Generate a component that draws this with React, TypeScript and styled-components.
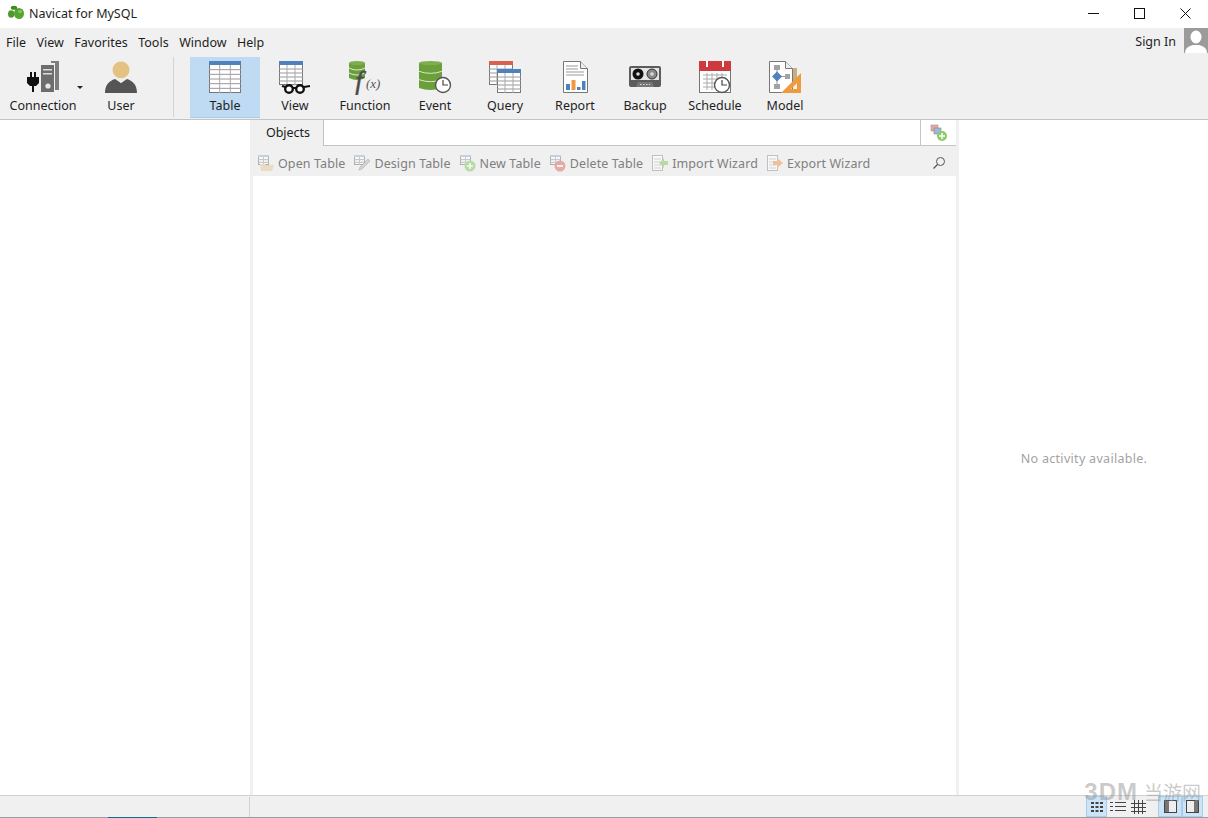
import React from "react";
import styled, { createGlobalStyle } from "styled-components";

const GlobalStyle = createGlobalStyle`
    html, body {
        margin: 0;
        padding: 0;
        background: #fff;
    }
    body {
        font-family: "Noto Sans", "Open Sans", sans-serif;
        font-size: 12.5px;
        color: #1e1e1e;
    }
`;

const Window = styled.div`
    position: relative;
    width: 1208px;
    height: 818px;
    display: flex;
    flex-direction: column;
    overflow: hidden;
`;

const TitleBar = styled.div`
    height: 28px;
    box-sizing: border-box;
    padding-bottom: 2px;
    display: flex;
    align-items: center;
    background: #fff;
`;

const AppTitle = styled.span`
    margin-left: 5px;
    font-size: 12.5px;
    flex: 1;
`;

const LogoIcon = styled.svg`
    margin-left: 8px;
`;

const WinButton = styled.div`
    width: 46px;
    height: 26px;
    display: flex;
    align-items: center;
    justify-content: center;
`;

const WinControls = styled.div`
    display: flex;
`;

const MenuRow = styled.div`
    height: 28px;
    display: flex;
    align-items: flex-start;
    background: #f0f0f0;
`;

const MenuList = styled.div`
    display: flex;
    flex: 1;
    padding-top: 6px;
    padding-left: 1px;
`;

const MenuItem = styled.span`
    padding: 0 5px;
    margin-right: 0.5px;
    line-height: 18px;
`;

const SignIn = styled.span`
    margin-right: 8px;
    padding-top: 5px;
    line-height: 18px;
`;

const Avatar = styled.div`
    width: 24px;
    height: 25px;
    background: #9b9b9b;
    overflow: hidden;
`;

const Toolbar = styled.div`
    height: 63px;
    display: flex;
    align-items: flex-start;
    background: #f0f0f0;
    border-bottom: 1px solid #c4c4c4;
`;

const ToolButton = styled.div<{ $active?: boolean; $width?: number }>`
    position: relative;
    width: ${(p) => p.$width ?? 70}px;
    height: 61px;
    margin-top: 1px;
    box-sizing: border-box;
    display: flex;
    flex-direction: column;
    align-items: center;
    padding-top: 2px;
    background: ${(p) => (p.$active ? "#bfdbf3" : "transparent")};
    border-bottom: 1px solid ${(p) => (p.$active ? "#a6cbec" : "transparent")};
    svg {
        display: block;
    }
`;

const ToolLabel = styled.span`
    margin-top: 2px;
    line-height: 18px;
    white-space: nowrap;
`;

const DropArrow = styled.span`
    position: absolute;
    left: 77px;
    top: 29px;
    width: 0;
    height: 0;
    border-left: 3px solid transparent;
    border-right: 3px solid transparent;
    border-top: 3px solid #222;
`;

const ToolSeparator = styled.div`
    width: 1px;
    height: 60px;
    margin: 1px 16px 0 17px;
    background: #d4d4d4;
`;

const Main = styled.div`
    flex: 1;
    display: grid;
    grid-template-columns: 250px 709px 1fr;
    min-height: 0;
    background: #fff;
`;

const LeftPanel = styled.div`
    background: #fff;
`;

const CenterPanel = styled.div`
    display: flex;
    flex-direction: column;
    border-left: 3px solid #f0f0f0;
    border-right: 3px solid #f0f0f0;
`;

const TabRow = styled.div`
    height: 25px;
    flex: none;
    display: flex;
    border-bottom: 1px solid #c4c4c4;
    background: #fff;
`;

const Tab = styled.div`
    width: 70px;
    display: flex;
    align-items: center;
    justify-content: center;
    padding-bottom: 2px;
    background: #f0f0f0;
    border-right: 1px solid #c4c4c4;
    margin-bottom: -1px;
`;

const TabFill = styled.div`
    flex: 1;
`;

const AddTabButton = styled.div`
    width: 35px;
    display: flex;
    align-items: center;
    justify-content: center;
    border-left: 1px solid #c4c4c4;
`;

const ActionBar = styled.div`
    height: 30px;
    flex: none;
    box-sizing: border-box;
    padding: 4px 0 0 5px;
    display: flex;
    align-items: center;
    gap: 9px;
    background: #f0f0f0;
`;

const Action = styled.div`
    display: flex;
    align-items: center;
    gap: 4px;
    color: #7f7f7f;
    letter-spacing: 0.1px;
    white-space: nowrap;
`;

const SearchIcon = styled.svg`
    margin-left: auto;
    margin-right: 10px;
`;

const ObjectArea = styled.div`
    flex: 1;
    background: #fff;
`;

const RightPanel = styled.div`
    display: flex;
    align-items: center;
    justify-content: center;
    padding: 2px 0 0 1px;
    color: #a3a3a3;
    letter-spacing: 0.3px;
`;

const StatusBar = styled.div`
    height: 21px;
    flex: none;
    display: flex;
    align-items: center;
    background: #f0f0f0;
    border-top: 1px solid #d2d2d2;
    border-bottom: 1px solid #9c9c9c;
`;

const StatusCell = styled.div`
    width: 249px;
    height: 20px;
    border-right: 1px solid #d2d2d2;
`;

const StatusIcons = styled.div`
    margin-left: auto;
    margin-right: 5px;
    display: flex;
    align-items: center;
`;

const StatusToggle = styled.div<{ $active?: boolean; $width?: number }>`
    width: ${(p) => p.$width ?? 21}px;
    height: 21px;
    display: flex;
    align-items: center;
    justify-content: center;
    box-sizing: border-box;
    background: ${(p) => (p.$active ? "#cde4f7" : "transparent")};
    border: 1px solid ${(p) => (p.$active ? "#a5cdf0" : "transparent")};
`;

const ToggleGap = styled.div`
    width: 9px;
`;

const Watermark = styled.div`
    position: absolute;
    right: 7px;
    bottom: 16px;
    display: flex;
    align-items: center;
    gap: 6px;
    color: rgba(150, 150, 150, 0.5);
    pointer-events: none;
`;

const WatermarkMark = styled.span`
    font-family: "Liberation Sans", sans-serif;
    font-weight: 700;
    font-size: 24px;
    letter-spacing: 1px;
    line-height: 20px;
`;

const WatermarkName = styled.span`
    font-family: "Noto Sans CJK SC", sans-serif;
    font-size: 19px;
    line-height: 20px;
`;

const BottomBleed = styled.div`
    position: absolute;
    left: 108px;
    bottom: 0;
    width: 49px;
    height: 1px;
    background: #0f6c8c;
`;

/* ---- drawings ---- */

const Grid = ({ x, y, w, h, head, rows = 5, cols = 3, headH = 4 }: { x: number; y: number; w: number; h: number; head: string; rows?: number; cols?: number; headH?: number }) => {
    const rowH = (h - headH) / rows;
    const colW = w / cols;
    return (
        <g>
            <rect x={x + 0.5} y={y + 0.5} width={w - 1} height={h - 1} fill="#fff" stroke="#777" />
            {Array.from({ length: rows - 1 }, (_, i) => (
                <line key={i} x1={x} x2={x + w} y1={y + headH + rowH * (i + 1)} y2={y + headH + rowH * (i + 1)} stroke="#999" />
            ))}
            {Array.from({ length: cols - 1 }, (_, i) => (
                <line key={i} x1={x + colW * (i + 1)} x2={x + colW * (i + 1)} y1={y + headH} y2={y + h} stroke="#aaa" />
            ))}
            <rect x={x} y={y} width={w} height={headH} fill={head} />
        </g>
    );
};

// solid cylinder with thin light arcs between the disks
const Db = ({ x, y, w, h, disks }: { x: number; y: number; w: number; h: number; disks: number }) => {
    const step = (h - 4) / disks;
    return (
        <g>
            <path d={`M${x} ${y + 2}V${y + h - 2}Q${x + w / 2} ${y + h + 2} ${x + w} ${y + h - 2}V${y + 2}z`} fill="#6a9f3a" />
            <ellipse cx={x + w / 2} cy={y + 2} rx={w / 2} ry={2} fill="#7fae4f" />
            {Array.from({ length: disks - 1 }, (_, i) => (
                <path key={i} d={`M${x} ${y + 2 + step * (i + 1)}Q${x + w / 2} ${y + 6 + step * (i + 1)} ${x + w} ${y + 2 + step * (i + 1)}`} fill="none" stroke="#dbe8cd" />
            ))}
        </g>
    );
};

const Clock = ({ cx, cy, r }: { cx: number; cy: number; r: number }) => (
    <g>
        <circle cx={cx} cy={cy} r={r} fill="#fff" stroke="#555" strokeWidth="1.4" />
        <path d={`M${cx} ${cy - r + 2.5}V${cy}H${cx + r - 2.5}`} fill="none" stroke="#444" strokeWidth="1.2" />
    </g>
);

const Ico36 = ({ children }: { children: React.ReactNode }) => (
    <svg width="36" height="36" viewBox="0 0 36 36">
        {children}
    </svg>
);

const ConnectionIcon = () => (
    <Ico36>
        <path d="M2 18h3v-5h2v5h2v-5h2v5h3v6l-3 3h-2v6H7v-6H5l-3-3z" fill="#111" />
        <path d="M16 6h13v27H16z" fill="#6d6d6d" />
        <path d="M30 2h4v29h-4z" fill="#7d7d7d" />
        <path d="M26 2h8v2h-8z" fill="#7d7d7d" />
        <rect x="18" y="10" width="9" height="1.5" fill="#ddd" />
        <rect x="18" y="14" width="9" height="1.5" fill="#ddd" />
        <circle cx="23" cy="27" r="2.6" fill="#e8e8e8" />
    </Ico36>
);

const UserIcon = () => (
    <Ico36>
        <circle cx="18" cy="11" r="8.5" fill="#e4c283" />
        <path d="M2 34c0-8 4-12 10-14l6 4 6-4c6 2 10 6 10 14z" fill="#555" />
        <path d="M13 19.500h10L18 24z" fill="#eee" />
    </Ico36>
);

const TableIcon = () => (
    <Ico36>
        <Grid x={2} y={2} w={32} h={32} head="#4f81bd" rows={6} cols={3} />
    </Ico36>
);

const ViewIcon = () => (
    <Ico36>
        <Grid x={2} y={2} w={24} h={24} head="#4f81bd" rows={5} cols={3} />
        <circle cx="12" cy="30" r="3.8" fill="#fff" stroke="#111" strokeWidth="2.4" />
        <circle cx="23" cy="30" r="3.8" fill="#fff" stroke="#111" strokeWidth="2.4" />
        <path d="M5 27l4 1M15 29h5M27 28l6-1" stroke="#111" strokeWidth="2.2" fill="none" />
    </Ico36>
);

const FunctionIcon = () => (
    <Ico36>
        <Db x={2} y={2} w={16} h={19} disks={3} />
        <text x="8" y="31" fontFamily="Liberation Serif, serif" fontStyle="italic" fontSize="28" fill="#4a4a4a" stroke="#4a4a4a" strokeWidth=".4">f</text>
        <text x="19" y="29" fontFamily="Liberation Serif, serif" fontStyle="italic" fontSize="13" fill="#555">(x)</text>
    </Ico36>
);

const EventIcon = () => (
    <Ico36>
        <Db x={2} y={2} w={23} h={29} disks={3} />
        <Clock cx={26} cy={26} r={7.5} />
    </Ico36>
);

const QueryIcon = () => (
    <Ico36>
        <Grid x={2} y={2} w={24} h={24} head="#d9604c" rows={5} cols={3} />
        <Grid x={10} y={10} w={24} h={24} head="#4f81bd" rows={5} cols={3} />
    </Ico36>
);

const ReportIcon = () => (
    <Ico36>
        <path d="M6.500 2.500h17l7 7v24h-24z" fill="#fff" stroke="#777" />
        <path d="M23.500 2.500v7h7" fill="#eee" stroke="#777" />
        <path d="M9 7h12M9 10h12M9 13h18M9 16h18" stroke="#999" />
        <rect x="9" y="25" width="4" height="6" fill="#4f81bd" />
        <rect x="14.500" y="21" width="4" height="10" fill="#f09a3e" />
        <rect x="20" y="28" width="3.500" height="3" fill="#4f81bd" />
        <rect x="25" y="22" width="3.500" height="9" fill="#4f81bd" />
    </Ico36>
);

const BackupIcon = () => (
    <Ico36>
        <rect x="2" y="7" width="32" height="21" rx="2" fill="#5c5c5c" />
        <rect x="4" y="9" width="28" height="12" fill="#e4e4e4" />
        <circle cx="11" cy="15" r="5.500" fill="#111" />
        <circle cx="11" cy="15" r="1.800" fill="#ddd" />
        <circle cx="25" cy="15" r="5" fill="#8a8a8a" stroke="#333" />
        <circle cx="25" cy="15" r="1.800" fill="#ddd" />
        <path d="M9 28l2-5h14l2 5z" fill="#777" />
        <path d="M13 25.500h10" stroke="#ddd" strokeDasharray="1.500 1.500" />
    </Ico36>
);

const ScheduleIcon = () => (
    <Ico36>
        <rect x="2.500" y="2.500" width="31" height="31" fill="#fff" stroke="#777" />
        <rect x="2" y="2" width="32" height="10" fill="#cf3a3f" />
        <rect x="9" y="2" width="2" height="6" fill="#fff" />
        <rect x="25" y="2" width="2" height="6" fill="#fff" />
        <path d="M6 16h24M6 20h24M6 24h24M6 28h24M10 14v17M15 14v17M20 14v17M25 14v17" stroke="#aaa" />
        <Clock cx={25} cy={26} r={7.5} />
    </Ico36>
);

const ModelIcon = () => (
    <Ico36>
        <path d="M2.500 2.500h16l7 7v24h-23z" fill="#fff" stroke="#777" />
        <path d="M18.500 2.500v7h7" fill="#eee" stroke="#777" />
        <rect x="7" y="6" width="6" height="5" fill="#a3a3a3" />
        <rect x="7" y="25" width="6" height="5" fill="#a3a3a3" />
        <rect x="18" y="15" width="5" height="5" fill="#a3a3a3" />
        <path d="M10 11v4M10 21v4M14 17.500h4" stroke="#999" />
        <path d="M10 12.500l5 5-5 5-5-5z" fill="#4f81bd" />
        <rect x="26" y="9" width="4" height="14" fill="#c9ae84" />
        <path d="M34 14v20H14zM30 24l-6 6h6z" fill="#f09a3e" fillRule="evenodd" />
    </Ico36>
);

const SmallTable = ({ x = 0, y = 0 }: { x?: number; y?: number }) => <Grid x={x} y={y} w={11} h={10} head="#9db8d8" rows={3} cols={2} headH={2} />;

const Muted = styled.svg`
    opacity: 0.55;
`;

const Small = ({ children }: { children: React.ReactNode }) => (
    <Muted width="16" height="18" viewBox="0 0 16 18">
        {children}
    </Muted>
);

const actions = [
    {
        label: "Open Table",
        icon: (
            <Small>
                <SmallTable y={1} />
                <path d="M2 10h5l1 1h8l-2 6H3z" fill="#e3cf9e" />
            </Small>
        ),
    },
    {
        label: "Design Table",
        icon: (
            <Small>
                <SmallTable y={1} />
                <path d="M14 5l2 2-8 8-3 1 1-3z" fill="#bbb" stroke="#777" strokeWidth=".6" />
            </Small>
        ),
    },
    {
        label: "New Table",
        icon: (
            <Small>
                <SmallTable y={1} />
                <circle cx="10" cy="12" r="5.500" fill="#8ccb6a" />
                <path d="M10 9v6M7 12h6" stroke="#fff" strokeWidth="1.600" />
            </Small>
        ),
    },
    {
        label: "Delete Table",
        icon: (
            <Small>
                <SmallTable y={1} />
                <circle cx="10" cy="12" r="5.500" fill="#d9736b" />
                <path d="M7 12h6" stroke="#fff" strokeWidth="1.800" />
            </Small>
        ),
    },
    {
        label: "Import Wizard",
        icon: (
            <Small>
                <rect x=".5" y="1.500" width="10" height="15" fill="#fff" stroke="#999" />
                <path d="M2 5h7M2 8h7M2 11h7M2 14h7" stroke="#bbb" />
                <path d="M16 7v4h-4v3l-5-5 5-5v3z" fill="#8ccb6a" />
            </Small>
        ),
    },
    {
        label: "Export Wizard",
        icon: (
            <Small>
                <rect x=".5" y="1.500" width="10" height="15" fill="#fff" stroke="#999" />
                <path d="M2 5h7M2 8h7M2 11h7M2 14h7" stroke="#bbb" />
                <path d="M6 7v4h4v3l6-5-6-5v3z" fill="#eb9c5a" />
            </Small>
        ),
    },
];

const tools = [
    { label: "Table", icon: <TableIcon />, active: true },
    { label: "View", icon: <ViewIcon /> },
    { label: "Function", icon: <FunctionIcon /> },
    { label: "Event", icon: <EventIcon /> },
    { label: "Query", icon: <QueryIcon /> },
    { label: "Report", icon: <ReportIcon /> },
    { label: "Backup", icon: <BackupIcon /> },
    { label: "Schedule", icon: <ScheduleIcon /> },
    { label: "Model", icon: <ModelIcon /> },
];

const menus = ["File", "View", "Favorites", "Tools", "Window", "Help"];

const App = () => {
    return (
        <Window>
            <GlobalStyle />
            <TitleBar>
                <LogoIcon width="16" height="16" viewBox="0 0 16 16">
                    <ellipse cx="3.200" cy="9" rx="3.200" ry="3.800" fill="#4e9b2d" />
                    <ellipse cx="11" cy="8.500" rx="5" ry="5.500" fill="#55a530" />
                    <ellipse cx="6" cy="2.800" rx="3.200" ry="2" fill="#3f8a24" />
                    <ellipse cx="12" cy="6.500" rx="2" ry="1.500" fill="#86c95d" />
                </LogoIcon>
                <AppTitle>Navicat for MySQL</AppTitle>
                <WinControls>
                    <WinButton>
                        <svg width="11" height="11" viewBox="0 0 11 11">
                            <path d="M0 5.500h11" stroke="#111" />
                        </svg>
                    </WinButton>
                    <WinButton>
                        <svg width="11" height="11" viewBox="0 0 11 11">
                            <rect x=".5" y=".5" width="10" height="10" fill="none" stroke="#111" />
                        </svg>
                    </WinButton>
                    <WinButton>
                        <svg width="11" height="11" viewBox="0 0 11 11">
                            <path d="M.5.5l10 10M10.500.5l-10 10" stroke="#111" />
                        </svg>
                    </WinButton>
                </WinControls>
            </TitleBar>

            <MenuRow>
                <MenuList>
                    {menus.map((m) => (
                        <MenuItem key={m}>{m}</MenuItem>
                    ))}
                </MenuList>
                <SignIn>Sign In</SignIn>
                <Avatar>
                    <svg width="24" height="25" viewBox="0 0 24 25">
                        <ellipse cx="12" cy="9" rx="5.500" ry="6.500" fill="#fff" />
                        <path d="M1 25c0-5 4-7 8-8h6c4 1 8 3 8 8z" fill="#fff" />
                    </svg>
                </Avatar>
            </MenuRow>

            <Toolbar>
                <ToolButton $width={86}>
                    <ConnectionIcon />
                    <ToolLabel>Connection</ToolLabel>
                    <DropArrow />
                </ToolButton>
                <ToolButton>
                    <UserIcon />
                    <ToolLabel>User</ToolLabel>
                </ToolButton>
                <ToolSeparator />
                {tools.map((t) => (
                    <ToolButton key={t.label} $active={t.active}>
                        {t.icon}
                        <ToolLabel>{t.label}</ToolLabel>
                    </ToolButton>
                ))}
            </Toolbar>

            <Main>
                <LeftPanel />
                <CenterPanel>
                    <TabRow>
                        <Tab>Objects</Tab>
                        <TabFill />
                        <AddTabButton>
                            <svg width="18" height="18" viewBox="0 0 18 18">
                                <rect x="1" y="1" width="7" height="6" fill="#e8a79d" stroke="#999" strokeWidth=".6" />
                                <rect x="4" y="4" width="7" height="6" fill="#9db8d8" stroke="#888" strokeWidth=".6" />
                                <circle cx="12" cy="12" r="5" fill="#8ccb6a" />
                                <path d="M12 9v6M9 12h6" stroke="#fff" strokeWidth="1.500" />
                            </svg>
                        </AddTabButton>
                    </TabRow>
                    <ActionBar>
                        {actions.map((a) => (
                            <Action key={a.label}>
                                {a.icon}
                                {a.label}
                            </Action>
                        ))}
                        <SearchIcon width="14" height="14" viewBox="0 0 14 14">
                            <circle cx="8.500" cy="5.500" r="4" fill="none" stroke="#555" />
                            <path d="M5.500 8.500L1.500 12.500" stroke="#555" strokeWidth="1.200" />
                        </SearchIcon>
                    </ActionBar>
                    <ObjectArea />
                </CenterPanel>
                <RightPanel>No activity available.</RightPanel>
            </Main>

            <StatusBar>
                <StatusCell />
                <StatusIcons>
                    <StatusToggle $active>
                        <svg width="14" height="14" viewBox="0 0 14 14">
                            <path d="M1 2h3v2H1zM5.500 2h3v2h-3zM10 2h3v2h-3zM1 6h3v2H1zM5.500 6h3v2h-3zM10 6h3v2h-3zM1 10h3v2H1zM5.500 10h3v2h-3zM10 10h3v2h-3z" fill="#444" />
                        </svg>
                    </StatusToggle>
                    <StatusToggle>
                        <svg width="16" height="14" viewBox="0 0 16 14">
                            <path d="M0 2h3v1H0zM5 2h11v1H5zM0 6h3v1H0zM5 6h11v1H5zM0 10h3v1H0zM5 10h11v1H5z" fill="#444" />
                        </svg>
                    </StatusToggle>
                    <StatusToggle>
                        <svg width="15" height="14" viewBox="0 0 15 14">
                            <path d="M0 3.500h15M0 7.500h15M0 11.500h15M3.500 0v14M7.500 0v14M11.500 0v14" stroke="#444" />
                        </svg>
                    </StatusToggle>
                    <ToggleGap />
                    <StatusToggle $active $width={24}>
                        <svg width="13" height="13" viewBox="0 0 13 13">
                            <rect x=".5" y=".5" width="12" height="12" fill="#eee" stroke="#444" />
                            <rect x="1" y="1" width="4" height="11" fill="#777" />
                        </svg>
                    </StatusToggle>
                    <StatusToggle $active>
                        <svg width="13" height="13" viewBox="0 0 13 13">
                            <rect x=".5" y=".5" width="12" height="12" fill="#eee" stroke="#444" />
                            <rect x="8" y="1" width="4" height="11" fill="#777" />
                        </svg>
                    </StatusToggle>
                </StatusIcons>
            </StatusBar>

            <Watermark>
                <WatermarkMark>3DM</WatermarkMark>
                <WatermarkName>当游网</WatermarkName>
            </Watermark>
            <BottomBleed />
        </Window>
    );
};

export default App;
